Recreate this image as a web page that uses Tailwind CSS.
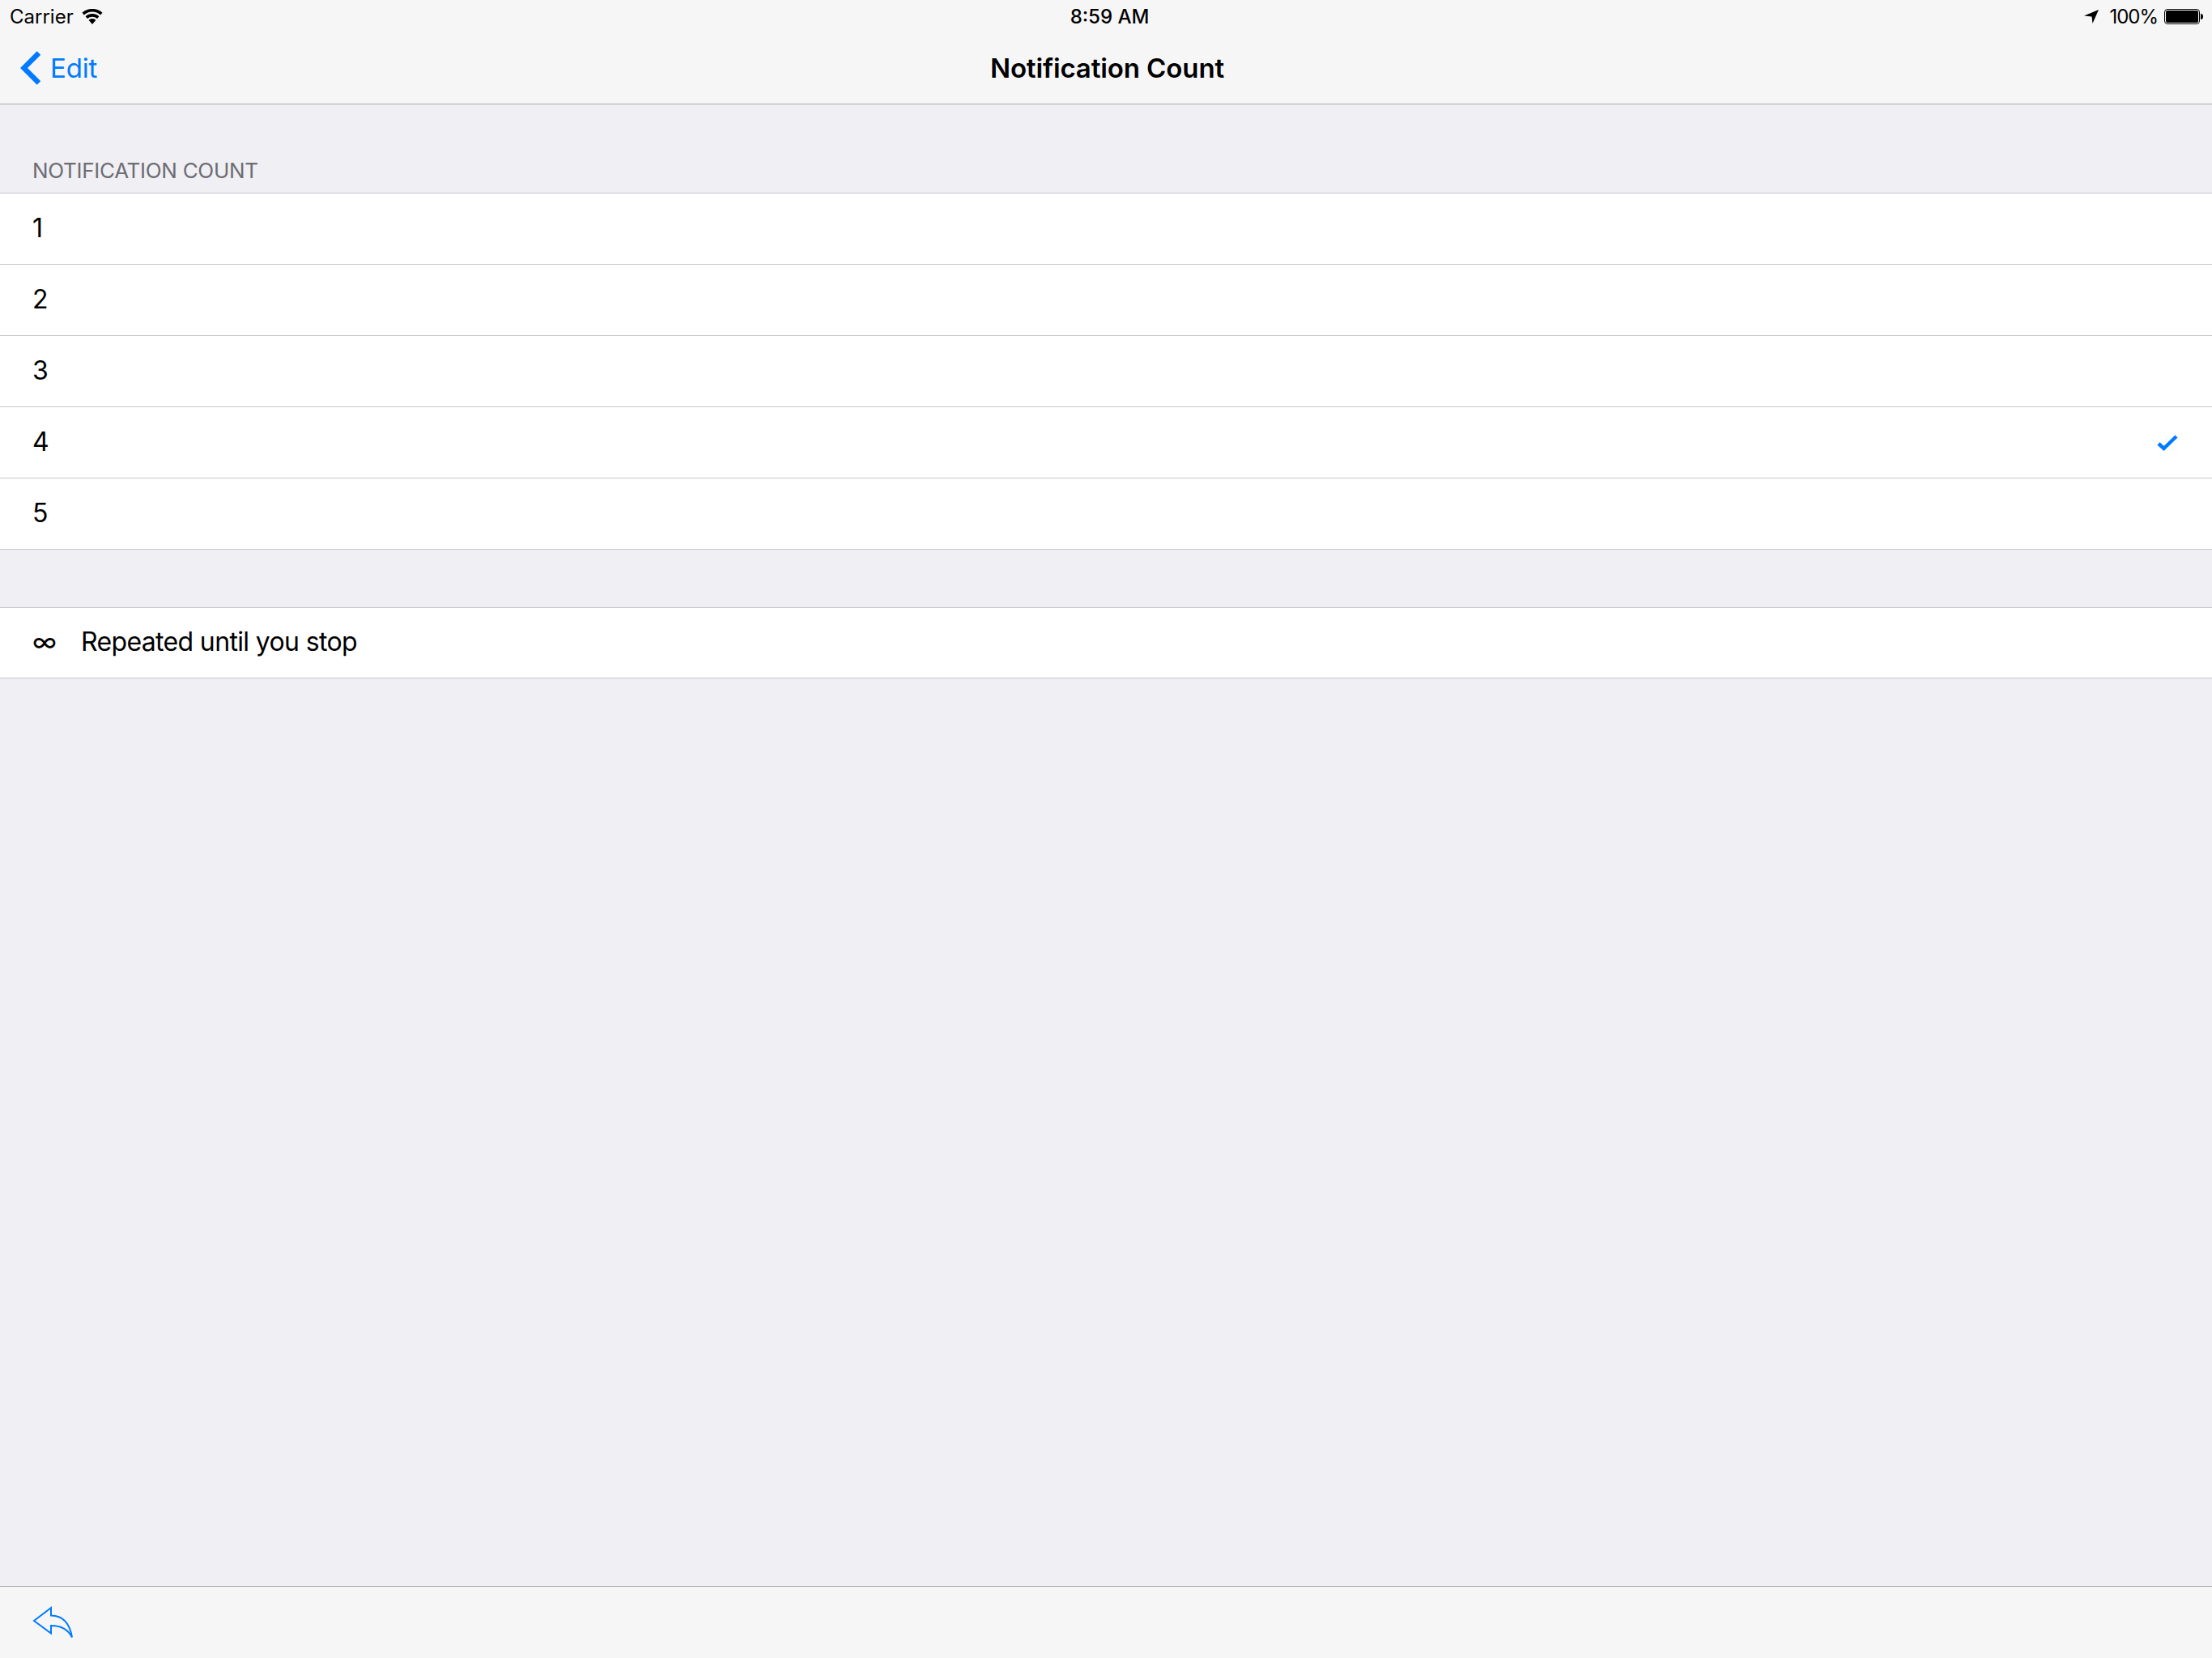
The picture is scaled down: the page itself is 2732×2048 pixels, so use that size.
<!DOCTYPE html>
<html lang="en">
  <head>
    <meta charset="UTF-8" />
    <title>Notification Count</title>
    <script src="https://cdn.jsdelivr.net/npm/@tailwindcss/browser@4"></script>
  </head>
  <body class="bg-[#efeff4] font-['Inter','Liberation_Sans',sans-serif] text-black">
    <div class="flex flex-col h-[2048px] w-[2732px] overflow-hidden">
      <header class="h-[129px] shrink-0 bg-[#f6f6f7] border-b border-[#a9a9ad]">
        <div class="h-[41px] pl-3 pr-[11px] grid grid-cols-[1fr_auto_1fr] items-center text-[24px]">
          <div class="flex items-center gap-[10px]">
            <span>Carrier</span>
            <svg class="w-[26px] h-[19px]" viewBox="0 0 26 19" fill="#000">
              <path d="M13 19l-4.500-5.200a6.500 6.500 0 0 1 9 0zM7 12l-2.400-2.700a12.500 12.500 0 0 1 16.800 0L19 12a9 9 0 0 0-12 0zM2.900 7.400L.5 4.700a18.700 18.700 0 0 1 25 0l-2.400 2.700a15 15 0 0 0-20.200 0z" />
            </svg>
          </div>
          <span class="ml-2 font-medium">8:59 AM</span>
          <div class="flex items-center justify-end">
            <svg class="w-5 h-5 mr-3" viewBox="0 0 20 20" fill="#000"><path d="M19 1L11.500 18l-1-8.500L1 8.500z" /></svg>
            <span class="mr-2 tracking-[-1px]">100%</span>
            <div class="flex items-center">
              <div class="w-[44px] h-[19px] rounded-[4px] border border-black p-[1px]">
                <div class="h-full rounded-[2px] bg-black"></div>
              </div>
              <div class="ml-[1px] w-[3px] h-[7px] bg-black rounded-r-sm"></div>
            </div>
          </div>
        </div>
        <div class="h-[87px] grid grid-cols-[1fr_auto_1fr] items-center">
          <div class="pl-[25px] flex items-center gap-3 text-[#007aff] text-[33px] tracking-[-0.2px]">
            <svg class="w-[25px] h-[42px] -mt-[2px]" viewBox="0 0 25 42" fill="none" stroke="#007aff" stroke-width="6.500">
              <path d="M23 2.500L4.500 21 23 39.500" />
            </svg>
            <span>Edit</span>
          </div>
          <h1 class="ml-[3px] text-[33px] font-semibold tracking-[-0.1px]">Notification Count</h1>
        </div>
      </header>
      <main class="flex-1">
        <div class="h-[109px] flex items-end pb-[11px] pl-10 text-[26px] leading-8 tracking-[-0.3px] text-[#6d6d72]">NOTIFICATION COUNT</div>
        <ul class="bg-white border-t border-[#c8c7cc] text-[32px] tracking-[-0.65px]">
          <li class="h-[88px] flex items-center pl-10 pb-[1px] border-b border-[#c8c7cc]">
            <div class="flex-1">1</div>
          </li>
          <li class="h-[88px] flex items-center pl-10 pb-[1px] border-b border-[#c8c7cc]">
            <div class="flex-1">2</div>
          </li>
          <li class="h-[88px] flex items-center pl-10 pb-[1px] border-b border-[#c8c7cc]">
            <div class="flex-1">3</div>
          </li>
          <li class="h-[88px] flex items-center pl-10 pr-[41px] pb-[1px] border-b border-[#c8c7cc]">
            <div class="flex-1">4</div>
            <svg class="w-[28px] h-[22px] mt-[1px]" viewBox="0 0 28 22" fill="none" stroke="#007aff" stroke-width="4.500">
              <path d="M3 12l6.500 6L25 3" />
            </svg>
          </li>
          <li class="h-[88px] flex items-center pl-10 pb-[1px] border-b border-[#c8c7cc]">
            <div class="flex-1">5</div>
          </li>
        </ul>
        <div class="mt-[71px] bg-white border-y border-[#c8c7cc] h-[88px] pb-[2px] flex items-center pl-10 text-[32px] tracking-[-0.65px]">
          <span class="w-[60px]">∞</span>
          <span>Repeated until you stop</span>
        </div>
      </main>
      <footer class="h-[89px] shrink-0 bg-[#f6f6f7] border-t border-[#a9a9ad] flex items-center pl-10">
        <svg class="w-[50px] h-[40px]" viewBox="0 0 50 40" fill="none" stroke="#007aff" stroke-width="2">
          <path d="M2 18L23 2v9.500c14 0 23 9 26 27-5-10-13-14.500-26-14.500v9.500z" />
        </svg>
      </footer>
    </div>
  </body>
</html>
